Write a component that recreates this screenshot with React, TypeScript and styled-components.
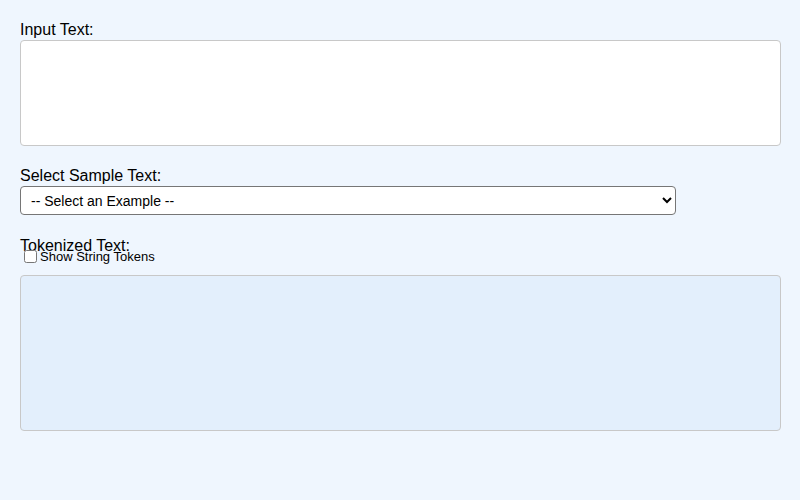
import { useState } from "react";
import styled, { createGlobalStyle } from "styled-components";

const GlobalStyle = createGlobalStyle`
  html, body {
    margin: 0;
    padding: 0;
    background: #eff6fe;
    font-family: "Liberation Sans", Arial, sans-serif;
  }
`;

const Page = styled.div`
  padding: 21px 20px 20px;
  min-height: 459px;
  background: #eff6fe;
`;

const Section = styled.div<{ gap?: number }>`
  margin-bottom: ${(props) => props.gap ?? 21}px;
`;

const Label = styled.label`
  display: block;
  font-size: 16px;
  line-height: 18px;
  color: #000;
  margin-bottom: 1px;
`;

const InputArea = styled.textarea`
  display: block;
  box-sizing: border-box;
  width: 761px;
  height: 106px;
  margin: 0;
  padding: 8px;
  border: 1px solid #c8c8c8;
  border-radius: 4px;
  background: #fff;
  resize: none;
  font-family: "Liberation Sans", Arial, sans-serif;
  font-size: 14px;
`;

const Select = styled.select`
  display: block;
  box-sizing: border-box;
  width: 656px;
  height: 29px;
  margin: 0;
  padding: 0 4px 0 6px;
  border: 1px solid #767676;
  border-radius: 4px;
  background: #fff;
  color: #000;
  font-family: "Liberation Sans", Arial, sans-serif;
  font-size: 14px;
`;

const TokenLabel = styled(Label)`
  margin-bottom: 0;
`;

const CheckRow = styled.label`
  display: flex;
  align-items: center;
  margin-top: -6px;
  font-size: 13px;
  line-height: 15px;
  color: #000;

  input {
    margin: 0 3px 0 4px;
    width: 13px;
    height: 13px;
  }
`;

const OutputBox = styled.div`
  box-sizing: border-box;
  width: 761px;
  height: 156px;
  margin-top: 11px;
  border: 1px solid #c8c8c8;
  border-radius: 4px;
  background: #e3effc;
  padding: 8px;
  font-size: 14px;
`;

export default function App() {
  const [text, setText] = useState("");
  const [showStrings, setShowStrings] = useState(false);

  return (
    <>
      <GlobalStyle />
      <Page>
        <Section>
          <Label htmlFor="input-text">Input Text:</Label>
          <InputArea id="input-text" value={text} onChange={(e) => setText(e.target.value)} />
        </Section>
        <Section gap={22}>
          <Label htmlFor="sample">Select Sample Text:</Label>
          <Select id="sample" defaultValue="" onChange={(e) => setText(e.target.value)}>
            <option value="">-- Select an Example --</option>
            <option value="Hello world!">Hello world</option>
            <option value="The quick brown fox jumps over the lazy dog.">Pangram</option>
          </Select>
        </Section>
        <TokenLabel>Tokenized Text:</TokenLabel>
        <CheckRow>
          <input type="checkbox" checked={showStrings} onChange={(e) => setShowStrings(e.target.checked)} />
          Show String Tokens
        </CheckRow>
        <OutputBox />
      </Page>
    </>
  );
}
